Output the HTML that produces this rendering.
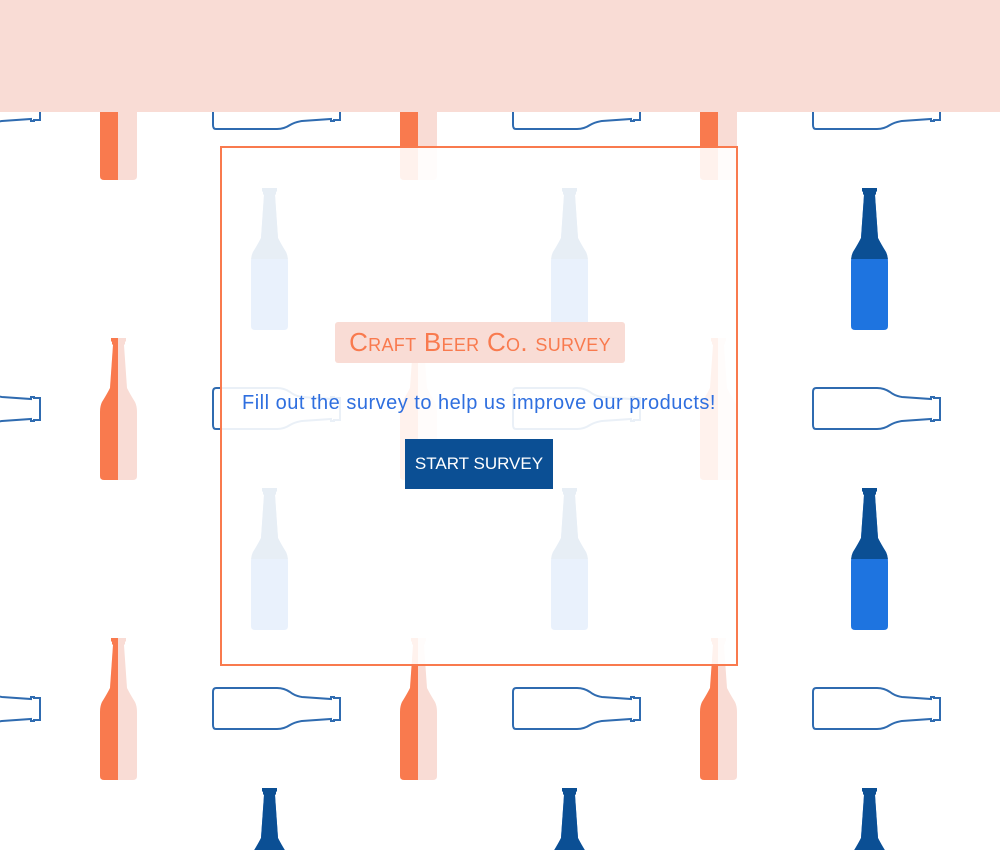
<!DOCTYPE html>
<html><head><meta charset="utf-8"><style>
html,body{margin:0;padding:0;width:1000px;height:850px;overflow:hidden;background:#fff;font-family:"Liberation Sans",sans-serif}
svg.bg{position:absolute;left:0;top:0}
.hdr{position:absolute;left:0;top:0;width:1000px;height:112px;background:#f9dcd5}
.card{position:absolute;left:220px;top:146px;width:514px;height:516px;border:2px solid #f97a4e;background:rgba(255,255,255,0.9);text-align:center}
.title{position:absolute;left:113px;top:174px;width:290px;height:41px;background:#f9dcd5;border-radius:3px;color:#f97a4e;font-size:26px;line-height:41px;font-variant:small-caps;letter-spacing:0.3px}
.sub{position:absolute;left:0;width:514px;top:244px;color:#2f6fdf;font-size:20px;letter-spacing:0.5px}
.btn{position:absolute;left:183px;top:291px;width:148px;height:50px;background:#0b4f94;color:#fff;font-size:17px;line-height:50px}
</style></head><body>
<svg class="bg" width="1000" height="850">
<defs>
<path id="vb" d="M11,0 H26 V3 L25,4 V6 L24,7 L27,50 Q30,56 35,64 Q37,68 37,74 V138 Q37,142 33,142 H4 Q0,142 0,138 V74 Q0,68 2,64 Q7,56 10,50 L13,7 L12,6 V4 L11,3 Z"/>
<clipPath id="cl"><rect x="0" y="0" width="18" height="142"/></clipPath>
<clipPath id="ct"><rect x="0" y="0" width="37" height="71"/></clipPath>
<g id="hb"><path d="M4,1 H65 Q72,1 78,5 Q83,9 90,10 L119,12 V10 H122 V11 H128 V33 H122 V34 H119 V32 L90,34 Q83,35 78,38 Q72,42 65,42 H4 Q1,42 1,38 V5 Q1,1 4,1 Z" fill="none" stroke="#2f6bb0" stroke-width="2"/></g>
<g id="ob"><use href="#vb" fill="#f9dcd5"/><use href="#vb" fill="#f97a4e" clip-path="url(#cl)"/></g>
<g id="bb"><use href="#vb" fill="#1e74e0"/><use href="#vb" fill="#0b4f94" clip-path="url(#ct)"/></g>
<pattern id="p" x="0" y="38" width="300" height="300" patternUnits="userSpaceOnUse">
<use href="#ob" x="100" y="0"/>
<use href="#hb" x="212" y="49"/>
<use href="#hb" x="-88" y="49"/>
<use href="#bb" x="251" y="150"/>
</pattern>
</defs>
<rect width="1000" height="850" fill="url(#p)"/>
</svg>
<div class="hdr"></div>
<div class="card">
<div class="title">Craft Beer Co. survey</div>
<div class="sub">Fill out the survey to help us improve our products!</div>
<div class="btn">START SURVEY</div>
</div>
</body></html>
